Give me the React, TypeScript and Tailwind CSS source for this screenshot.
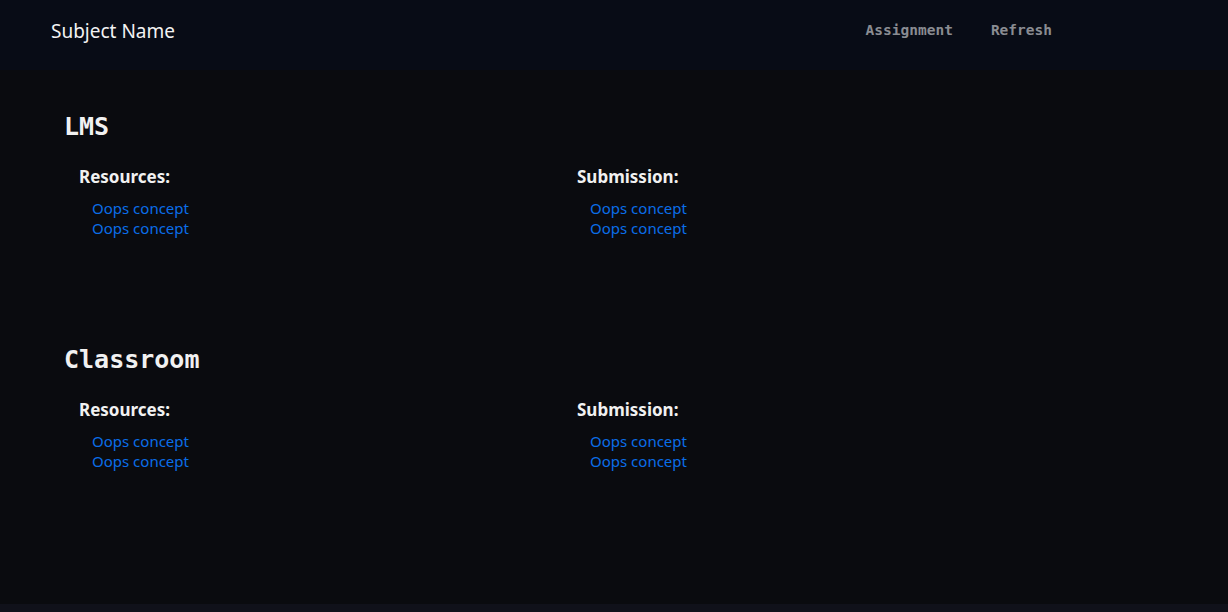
const sections = ["LMS", "Classroom"];

function LinkList({ title }: { title: string }) {
  return (
    <div>
      <h3 className="text-[17px] font-bold leading-[24px] text-[#f1f1f1]">{title}</h3>
      <ul className="mt-[9px] pl-[13px]">
        {["Oops concept", "Oops concept"].map((l, i) => (
          <li key={i} className="text-[15px] leading-[20px]">
            <a href="#" className="text-[#0b6ee8]">
              {l}
            </a>
          </li>
        ))}
      </ul>
    </div>
  );
}

export default function App() {
  return (
    <div className="flex min-h-[612px] flex-col bg-[#0a0b0f] font-['Noto_Sans',sans-serif]">
      {/* top bar */}
      <header className="flex h-[70px] items-center justify-between bg-[#080c16] pb-[8px] pl-[51px] pr-[176px]">
        <div className="text-[19px] text-[#f3f3f3]">Subject Name</div>
        <nav className="flex gap-[38px] font-['DejaVu_Sans_Mono',monospace] text-[14.5px] font-bold text-[#8a8c92]">
          <a href="#">Assignment</a>
          <a href="#">Refresh</a>
        </nav>
      </header>

      <main className="flex-1 pl-[64px] pt-[42px]">
        {sections.map((s) => (
          <section key={s} className="mb-[107px]">
            <h2 className="font-['DejaVu_Sans_Mono',monospace] text-[25px] font-bold leading-[30px] text-[#f1f1f1]">
              {s}
            </h2>
            <div className="mt-[23px] grid grid-cols-[498px_498px] pl-[15px]">
              <LinkList title="Resources:" />
              <LinkList title="Submission:" />
            </div>
          </section>
        ))}
      </main>
      <div className="h-[8px] bg-[#10111a]" />
    </div>
  );
}
